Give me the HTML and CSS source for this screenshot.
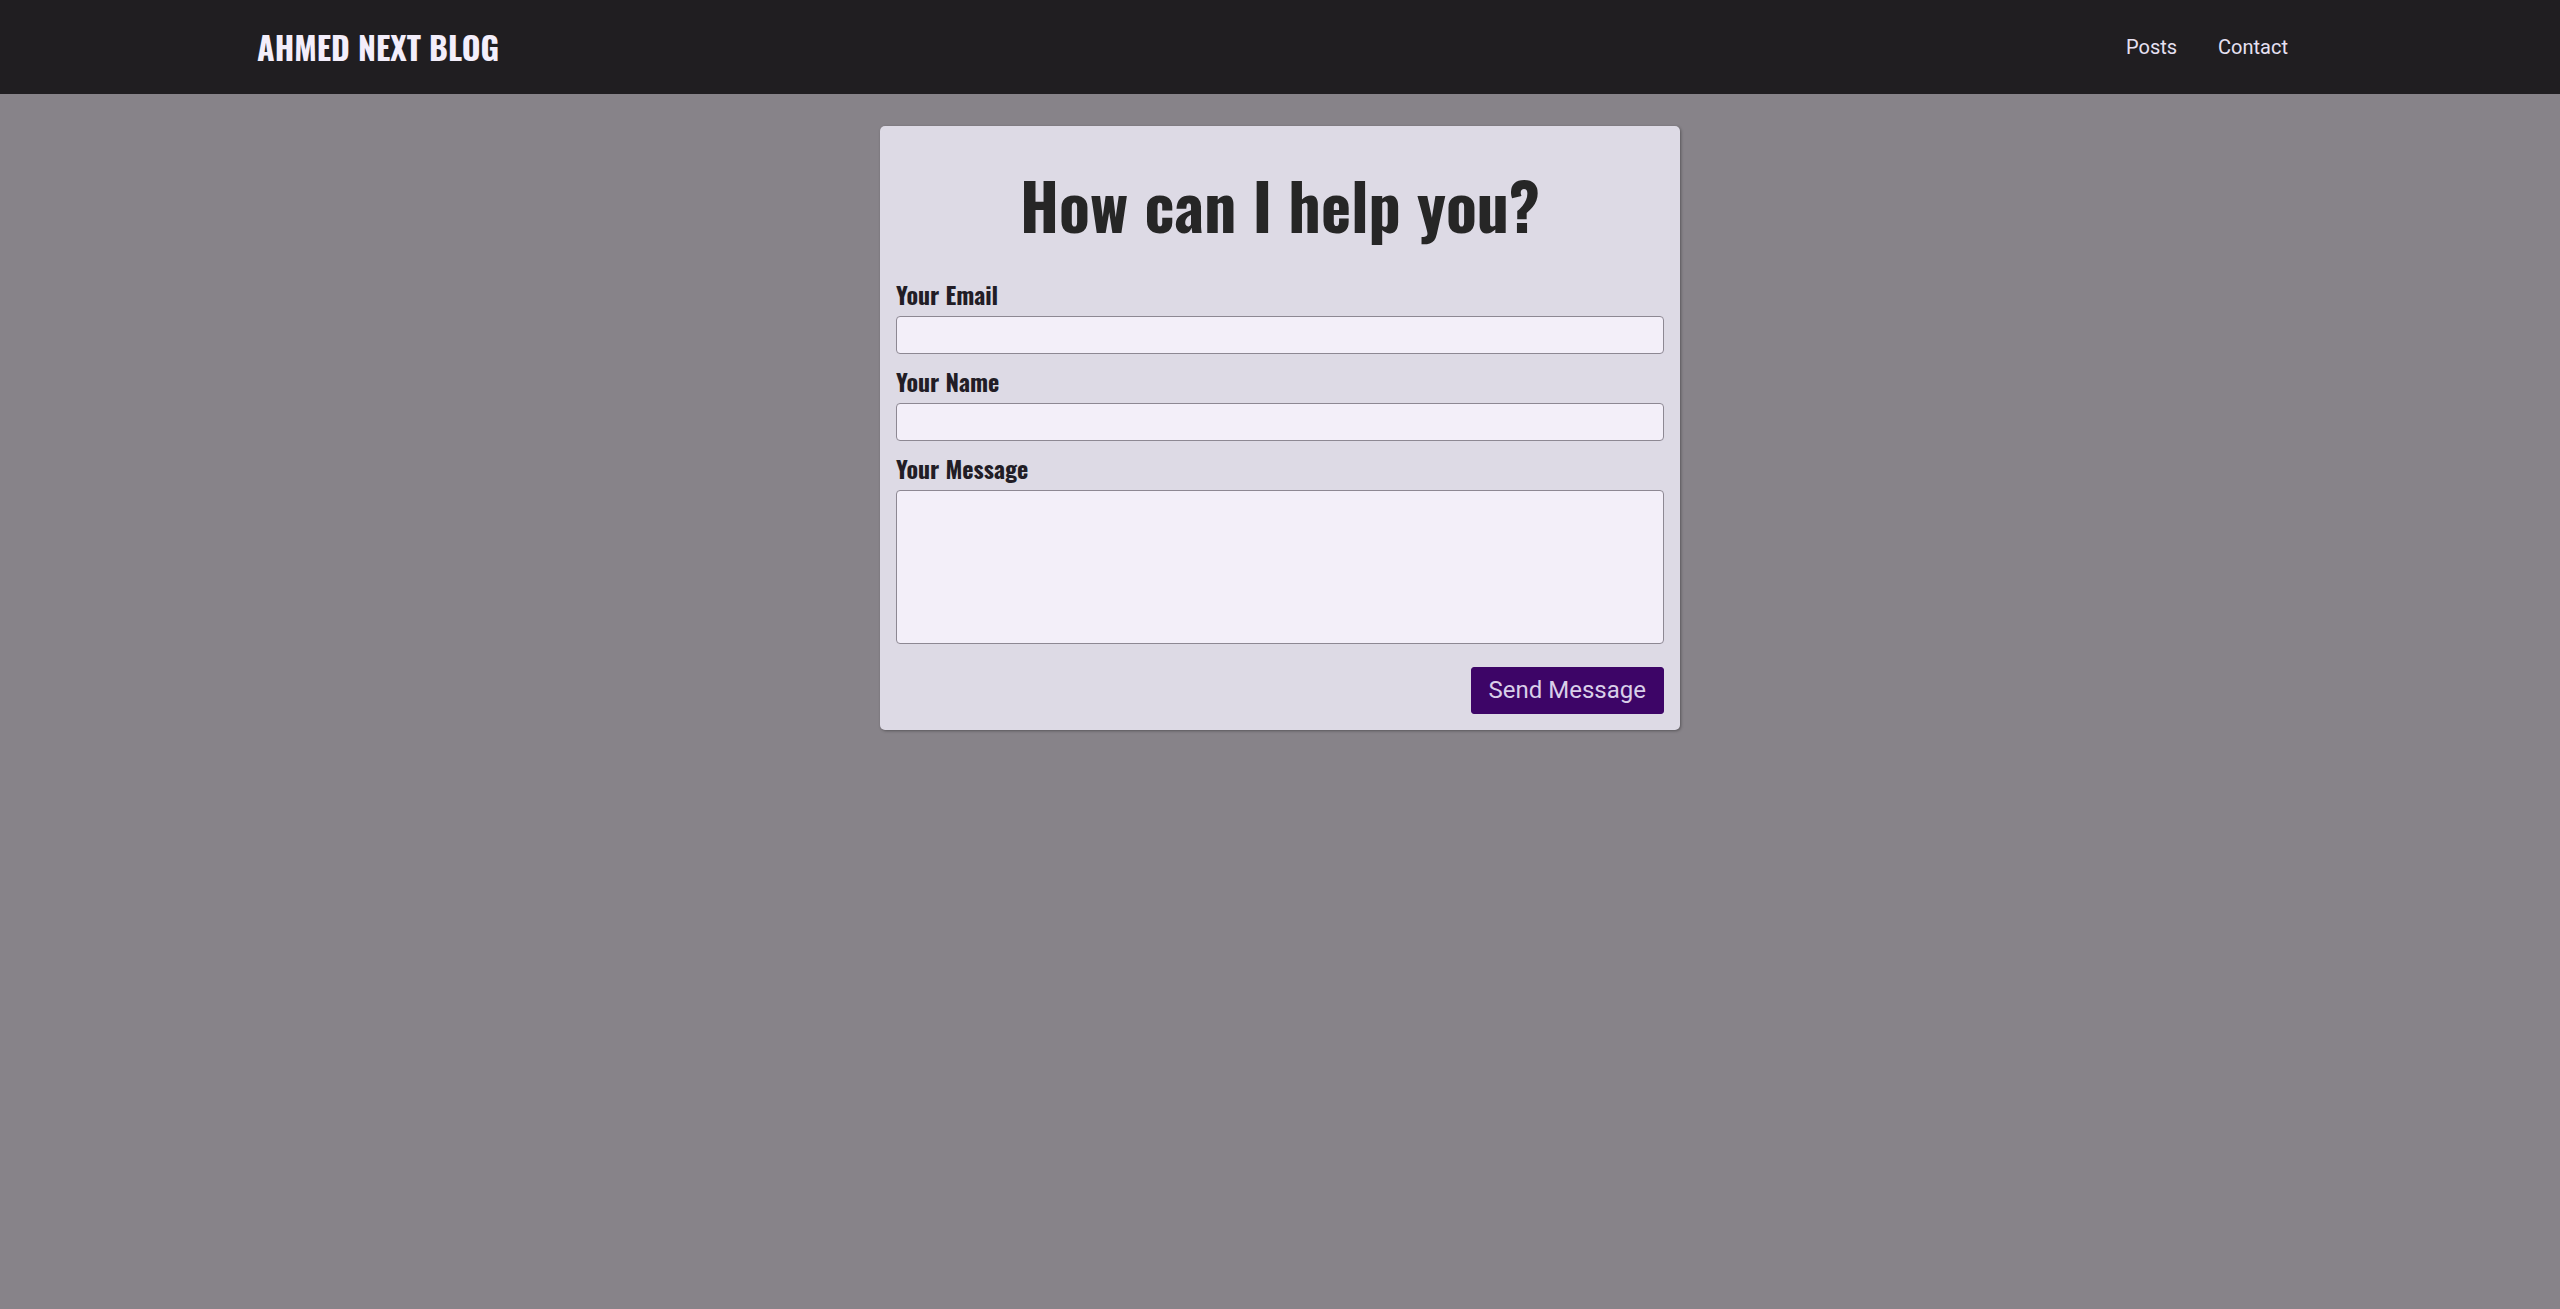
FILE: index.html
```html
<!DOCTYPE html>
<html lang="en">
<head>
<meta charset="utf-8">
<title>Contact - Ahmed Next Blog</title>
<link rel="stylesheet" href="styles.css">
</head>
<body>
<header class="site-header">
  <div class="header-inner">
    <a class="logo" href="#">AHMED NEXT BLOG</a>
    <nav class="main-nav">
      <a href="#">Posts</a>
      <a href="#">Contact</a>
    </nav>
  </div>
</header>
<main class="page">
  <section class="contact-card">
    <h1 class="contact-title">How can I help you?</h1>
    <form class="contact-form">
      <div class="field">
        <label for="email">Your Email</label>
        <input id="email" type="email">
      </div>
      <div class="field">
        <label for="name">Your Name</label>
        <input id="name" type="text">
      </div>
      <div class="field">
        <label for="message">Your Message</label>
        <textarea id="message"></textarea>
      </div>
      <div class="actions">
        <button type="button" class="send-btn">Send Message</button>
      </div>
    </form>
  </section>
</main>
</body>
</html>
```

FILE: styles.css
```css
* { box-sizing: border-box; }

html, body {
  margin: 0;
  padding: 0;
}

body {
  background: #878389;
  font-family: Roboto, "Liberation Sans", sans-serif;
  min-height: 100vh;
}

.site-header {
  background: #201e21;
  height: 94px;
}

.header-inner {
  width: 80%;
  margin: 0 auto;
  height: 100%;
  display: flex;
  align-items: center;
  justify-content: space-between;
}

.logo {
  font-family: "Oswald", "Liberation Sans Narrow", sans-serif;
  font-weight: 700;
  font-size: 32px;
  line-height: 40px;
  color: #f3eefb;
  text-decoration: none;
  padding-left: 1px;
}

.main-nav {
  display: flex;
  align-items: center;
  gap: 9px;
}

.main-nav a {
  color: #e6e0f2;
  text-decoration: none;
  font-size: 20px;
  line-height: 24px;
  padding: 0 16px;
}

.page {
  padding-top: 32px;
}

.contact-card {
  width: 800px;
  margin: 0 auto;
  background: #dddae5;
  border-radius: 5px;
  box-shadow: 1px 1px 3px rgba(0, 0, 0, 0.35);
  padding: 16px;
}

.contact-title {
  font-family: "Oswald", "Liberation Sans Narrow", sans-serif;
  font-weight: 700;
  font-size: 64px;
  line-height: 80px;
  color: #262626;
  text-align: center;
  margin: 22px 0 35px;
}

.contact-form {
  display: flex;
  flex-direction: column;
  gap: 12px;
}

.field {
  display: flex;
  flex-direction: column;
  gap: 7px;
}

.field label {
  font-family: "Oswald", "Liberation Sans Narrow", sans-serif;
  font-weight: 700;
  font-size: 24px;
  line-height: 30px;
  color: #221d26;
}

.field input,
.field textarea {
  display: block;
  width: 100%;
  margin: 0;
  background: #f3eff9;
  border: 1px solid #8d8893;
  border-radius: 4px;
  font-family: Roboto, sans-serif;
  font-size: 18px;
  padding: 4px 8px;
}

.field input {
  height: 38px;
}

.field textarea {
  height: 154px;
  resize: none;
}

.actions {
  display: flex;
  justify-content: flex-end;
  padding-top: 11px;
}

.send-btn {
  font-family: Roboto, sans-serif;
  font-size: 24px;
  line-height: 29px;
  color: #d9cfe9;
  background: #3d0567;
  border: 1px solid #3d0567;
  border-radius: 3px;
  padding: 8px 17px;
  height: 47px;
  cursor: pointer;
}
```
